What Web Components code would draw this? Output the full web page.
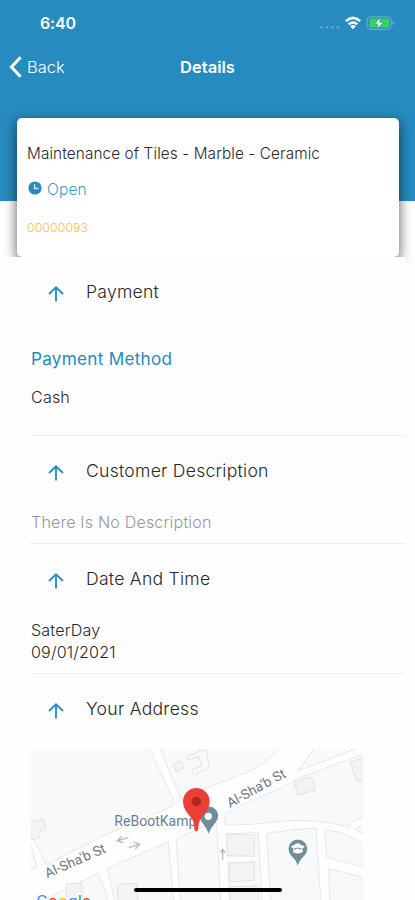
<!DOCTYPE html>
<html lang="en">
<head>
<meta charset="utf-8">
<title>Details</title>
<style>
html,body{margin:0;height:900px;overflow:hidden;background:#fefefe}
body{font-family:Inter,"Liberation Sans",sans-serif;font-weight:350;color:#28282a}
</style>
</head>
<body>
<details-screen></details-screen>
<script>
function define(name, markup) {
  const template = document.createElement('template');
  template.innerHTML = markup;
  customElements.define(name, class extends HTMLElement {
    constructor() {
      super();
      this.attachShadow({ mode: 'open' }).append(template.content.cloneNode(true));
    }
  });
}

define('status-bar', `
<style>
:host{display:flex;height:46px;align-items:center;justify-content:space-between;padding:0 20px 0 40px;box-sizing:border-box;color:#fff}
.time{font-size:16px;font-weight:600;line-height:20px;letter-spacing:-.2px}
svg{display:block}
</style>
<span class="time">6:40</span>
<svg width="80" height="20" viewBox="315 13 80 20">
  <g fill="#62a9d3"><circle cx="321.6" cy="27.3" r="1.4"/><circle cx="327" cy="27.3" r="1.4"/><circle cx="332.4" cy="27.3" r="1.4"/><circle cx="337.8" cy="27.3" r="1.4"/></g>
  <g fill="none" stroke="#fff" stroke-width="2.5"><path d="M345.8 21.2Q353 14.6 360.2 21.2"/><path d="M348.7 24.4Q353 20.6 357.3 24.4"/></g>
  <path fill="#fff" d="M350.2 26.2Q353 24 355.8 26.2L353 29.2Z"/>
  <rect x="367.2" y="16.8" width="24" height="12.6" rx="3.8" fill="none" stroke="#62a9d3" stroke-width="1.2"/>
  <path d="M392.6 21v4.2q1.8-.8 1.8-2.1t-1.8-2.1z" fill="#72b3d8"/>
  <rect x="369.3" y="18.6" width="20" height="9" rx="1.8" fill="#35d45c"/>
  <path d="M380.6 17.8L374.6 23.9h3.5l-1 4.8 6.3-6.4h-3.7z" fill="#fff" stroke="#278bc0" stroke-width=".6"/>
</svg>`);

define('nav-bar', `
<style>
:host{display:grid;grid-template-columns:1fr auto 1fr;height:42px;align-items:center;padding:0 9px;color:#fff;line-height:22px}
.back{display:flex;align-items:center;gap:5px;font-size:16.5px;letter-spacing:0}
.title{font-size:16.5px;font-weight:600;letter-spacing:0}
svg{display:block}
</style>
<span class="back"><svg width="13" height="22" viewBox="0 0 13 22"><path d="M11.6 1.2L2.4 11l9.2 9.8" fill="none" stroke="#fff" stroke-width="3"/></svg><span><slot name="back"></slot></span></span>
<span class="title"><slot></slot></span>`);

define('order-card', `
<style>
:host{display:block;box-sizing:border-box;height:139px;margin:30px 16px 0 17px;padding:25px 10px 0;background:#fff;border-radius:5px;box-shadow:0 4px 13px rgba(0,0,0,.65)}
.name{font-size:15.3px;line-height:22px;white-space:nowrap;letter-spacing:.12px}
.state{display:flex;align-items:center;gap:5px;margin:14px 0 0 1px;font-size:15.6px;line-height:22px;letter-spacing:.1px;color:#4599c8}
.state svg{display:block;margin-top:-5px}
.num{margin-top:19px;font-size:12.3px;line-height:16px;letter-spacing:.08px;color:#fbbd45}
</style>
<div class="name"><slot></slot></div>
<div class="state"><svg width="14" height="14" viewBox="0 0 14 14"><circle cx="7" cy="7" r="6.6" fill="#278bc0"/><path d="M6.6 3v4.5h4" fill="none" stroke="#d4e9f4" stroke-width="1.3"/></svg><span><slot name="state"></slot></span></div>
<div class="num"><slot name="number"></slot></div>`);

define('detail-section', `
<style>
:host{display:block;margin:0 0 0 31px;border-bottom:1px solid #eeeeef}
:host([last]){border:0}
.head{display:flex;height:70px;align-items:center}
.head svg{display:block;margin:3px 22px 0 17px}
.head span{font-size:17.6px;line-height:24px;letter-spacing:.25px}
</style>
<div class="head"><svg width="16" height="16" viewBox="0 0 16 16"><path d="M8 15.5V1.6M1 8L8 1.3 15 8" fill="none" stroke="#2a8ec4" stroke-width="1.9"/></svg><span><slot name="title"></slot></span></div>
<slot></slot>`);

define('detail-line', `
<style>
:host{display:block;font-size:16.1px;line-height:22px;letter-spacing:.16px}
:host([kind=label]){font-size:17.2px;font-weight:400;line-height:24px;letter-spacing:.24px;color:#278bbf;padding:20px 0 15px}
:host([kind=muted]){color:#98989b}
</style><slot></slot>`);

define('street-map', `
<style>
:host{display:block;margin-top:5px;width:332px;height:151px;overflow:hidden}
svg{display:block}
text{font-family:Roboto,sans-serif;font-weight:400}
</style>
<svg width="332" height="151" viewBox="33 27 996 453">
<rect x="33" y="27" width="996" height="453" fill="#fefefe"/>
<g fill="#f8f9fa" stroke="#e6e8ea" stroke-width="3" stroke-linejoin="round">
<path d="M20 14H384L464 188Q462 198 440 206L255 285 78 374 42 300 20 290Z"/>
<path d="M20 300L33 312 50 382 20 396Z"/>
<path d="M415 14H790Q735 75 680 97L565 142Q510 158 490 192Z"/>
<path d="M893 14H1040L833 93Z"/>
<path d="M1040 38L842 112 765 152 622 215Q614 220 615 255Q700 255 770 245Q880 233 985 260Q1000 240 1040 226Z"/>
<path d="M50 490L235 400 268 490Z"/>
<path d="M262 386L445 305 461 490H286Z"/>
<path d="M468 298L540 264 590 246 602 490H482Z"/>
<path d="M620 282L714 277 727 490H630Z"/>
<path d="M740 280Q810 267 888 265L903 490H753Z"/>
<path d="M913 270Q975 272 1040 318V384L920 352Z"/>
<path d="M926 386L1040 415V490H930Z"/>
<path d="M1003 268L1040 252V286Z"/>
</g>
<path d="M621 356L716 356" stroke="#fefefe" stroke-width="11"/>
<g fill="#f1f3f4" stroke="#e0e2e4" stroke-width="3" stroke-linejoin="round">
<path d="M25 247L69 237 79 263 56 277 61 291 25 302Z"/>
<path d="M458 74L482 63 491 84 468 96Z"/>
<path d="M499 50L548 30Q557 28 560 38L566 72Q567 83 558 88L520 105 515 91 545 77 537 49 503 61Z" fill="#f8f9fa"/>
<path d="M620 282L703 285V349L621 347Z"/><path d="M626 370L703 366V420L628 427Z"/><path d="M629 440L714 438 718 490H631Z"/>
<path d="M138 433L184 428 190 490H140Z"/><path d="M292 433L350 430 354 490H294Z"/>
<path d="M824 127L869 110Q880 112 887 150L833 165Z"/><path d="M990 65L1040 50V125L1010 122Z"/>
</g>
<g fill="none" stroke="#b1b8c6" stroke-width="4"><path d="M325 293L292 302M305 289L292 302 309 308M326 323L358 313M342 306L358 313 346 327M608 359V328M601 338L608 328 615 338"/></g>
<g fill="#71767b" font-size="41" stroke="#fff" stroke-width="6" paint-order="stroke" stroke-linejoin="round">
<text transform="translate(82 415) rotate(-24)" textLength="195" lengthAdjust="spacingAndGlyphs">Al-Sha'b St</text>
<text transform="translate(630 204) rotate(-29)" textLength="195" lengthAdjust="spacingAndGlyphs">Al-Sha'b St</text>
<text x="283" y="259" font-size="42" fill="#67808d" textLength="246" lengthAdjust="spacingAndGlyphs">ReBootKamp</text>
</g>
<g fill="#6f8d9b" stroke="#fff" stroke-width="2">
<path d="M566 283Q558 263 545 247A29 29 0 1 1 588 247Q573 263 566 283Z"/>
<path d="M833 379Q828 361 812 346A29 29 0 1 1 855 346Q839 361 833 379Z"/>
</g>
<circle cx="565" cy="229" r="11" fill="#fff"/>
<path d="M812 320L833 309 855 320 848 325V336Q833 345 819 336V325Z" fill="#fff"/><path d="M820 328Q833 320 847 328" fill="none" stroke="#6f8d9b" stroke-width="3"/>
<path d="M529 274C521 274 524 258 520 245C515 229 489 215 489 184A40 40 0 0 1 569 184C569 215 543 229 538 245C534 258 537 274 529 274Z" fill="#e94235"/>
<circle cx="529" cy="184" r="14" fill="#b1271d"/>
<text x="49" y="501" font-size="51" textLength="164" stroke="#fff" stroke-width="7" paint-order="stroke"><tspan fill="#4285f4">G</tspan><tspan fill="#ea4335">o</tspan><tspan fill="#fbbc04">o</tspan><tspan fill="#4285f4">g</tspan><tspan fill="#34a853">l</tspan><tspan fill="#ea4335">e</tspan></text>
</svg>`);

define('details-screen', `
<style>
:host{display:block;position:relative;width:415px;height:900px;overflow:hidden;background:linear-gradient(#278bc0 201px,#fefefe 201px)}
main{background:#fefefe;margin:0 10px 0 0;position:relative}
.customer,.date{padding:5px 0 10px}
.pay{padding-bottom:27px}
.home{position:absolute;left:134px;top:888px;width:148px;height:4px;border-radius:2px;background:#000}
</style>
<status-bar></status-bar>
<nav-bar><span slot="back">Back</span>Details</nav-bar>
<order-card>Maintenance of Tiles - Marble - Ceramic<span slot="state">Open</span><span slot="number">00000093</span></order-card>
<main>
<detail-section><span slot="title">Payment</span><div class="pay"><detail-line kind="label">Payment Method</detail-line><detail-line>Cash</detail-line></div></detail-section>
<detail-section><span slot="title">Customer Description</span><div class="customer"><detail-line kind="muted">There Is No Description</detail-line></div></detail-section>
<detail-section><span slot="title">Date And Time</span><div class="date"><detail-line>SaterDay</detail-line><detail-line>09/01/2021</detail-line></div></detail-section>
<detail-section last><span slot="title">Your Address</span><street-map></street-map></detail-section>
</main>
<div class="home"></div>`);
</script>
</body>
</html>
